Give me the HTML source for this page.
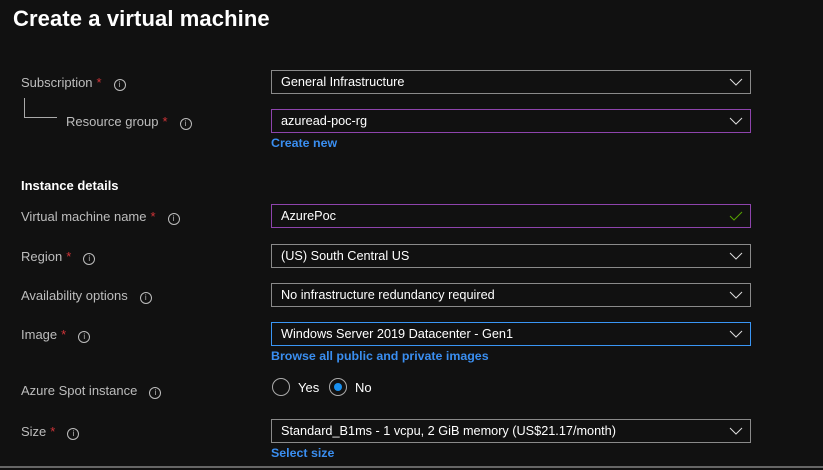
<!DOCTYPE html><html><head><style>
body{margin:0;width:823px;height:470px;background:#111111;font-family:"Liberation Sans",sans-serif;position:relative;overflow:hidden;color:#fff}
.a{position:absolute}
h1{position:absolute;left:13px;top:6px;margin:0;font-size:22px;font-weight:bold;color:#fff;letter-spacing:0.1px}
.l{position:absolute;left:21px;font-size:13px;color:#bdbdbd;line-height:16px}
.s{color:#d13438;margin-left:4px}
.i{display:inline-block;width:10px;height:10px;border:1px solid #bdbdbd;border-radius:50%;font-size:8px;line-height:10px;text-align:center;margin-left:12px;vertical-align:0px}
.f{position:absolute;left:271px;width:478px;height:22px;border:1px solid #8a8a8a;font-size:12.7px;line-height:23px;color:#fff;box-sizing:content-box}
.f span{position:absolute;left:9px}
.f svg{position:absolute;right:7px;top:6px}
.k{position:absolute;left:271px;font-size:12.4px;color:#3a8ef0;font-weight:bold}
</style></head><body>
<h1>Create a virtual machine</h1>
<div class="l" style="top:75px">Subscription<span class="s">*</span><span class="i">i</span></div>
<div class="a" style="left:24px;top:98px;width:1px;height:19px;background:#aaa"></div>
<div class="a" style="left:24px;top:117px;width:33px;height:1px;background:#aaa"></div>
<div class="l" style="left:66px;top:114px">Resource group<span class="s">*</span><span class="i">i</span></div>
<div class="f" style="top:70px"><span>General Infrastructure</span><svg width="14" height="10"><path d="M1 2l6 6 6-6" stroke="#ddd" fill="none"/></svg></div>
<div class="f" style="top:109px;border-color:#8e44ad"><span>azuread-poc-rg</span><svg width="14" height="10"><path d="M1 2l6 6 6-6" stroke="#ddd" fill="none"/></svg></div>
<div class="k" style="top:136px">Create new</div>
<div class="l" style="top:178px;color:#fff;font-weight:bold">Instance details</div>
<div class="l" style="top:209px">Virtual machine name<span class="s">*</span><span class="i">i</span></div>
<div class="f" style="top:204px;border-color:#8e44ad"><span>AzurePoc</span><svg width="14" height="10"><path d="M1 5l4 4 8-8" stroke="#57a300" fill="none"/></svg></div>
<div class="l" style="top:249px">Region<span class="s">*</span><span class="i">i</span></div>
<div class="f" style="top:244px"><span>(US) South Central US</span><svg width="14" height="10"><path d="M1 2l6 6 6-6" stroke="#ddd" fill="none"/></svg></div>
<div class="l" style="top:288px">Availability options<span class="i">i</span></div>
<div class="f" style="top:283px"><span>No infrastructure redundancy required</span><svg width="14" height="10"><path d="M1 2l6 6 6-6" stroke="#ddd" fill="none"/></svg></div>
<div class="l" style="top:327px">Image<span class="s">*</span><span class="i">i</span></div>
<div class="f" style="top:322px;border-color:#3a96f5"><span>Windows Server 2019 Datacenter - Gen1</span><svg width="14" height="10"><path d="M1 2l6 6 6-6" stroke="#ddd" fill="none"/></svg></div>
<div class="k" style="top:349px">Browse all public and private images</div>
<div class="l" style="top:383px">Azure Spot instance<span class="i">i</span></div>
<div class="a" style="left:272px;top:378px;width:16px;height:16px;border:1px solid #aaa;border-radius:50%"></div>
<div class="a" style="left:298px;top:380px;font-size:13px">Yes</div>
<div class="a" style="left:329px;top:378px;width:16px;height:16px;border:1px solid #aaa;border-radius:50%"><div class="a" style="left:4px;top:4px;width:8px;height:8px;border-radius:50%;background:#1890f1"></div></div>
<div class="a" style="left:355px;top:380px;font-size:13px">No</div>
<div class="l" style="top:424px">Size<span class="s">*</span><span class="i">i</span></div>
<div class="f" style="top:419px"><span>Standard_B1ms - 1 vcpu, 2 GiB memory (US$21.17/month)</span><svg width="14" height="10"><path d="M1 2l6 6 6-6" stroke="#ddd" fill="none"/></svg></div>
<div class="k" style="top:446px">Select size</div>
<div class="a" style="left:0;top:466px;width:823px;height:2px;background:#666"></div>
</body></html>
